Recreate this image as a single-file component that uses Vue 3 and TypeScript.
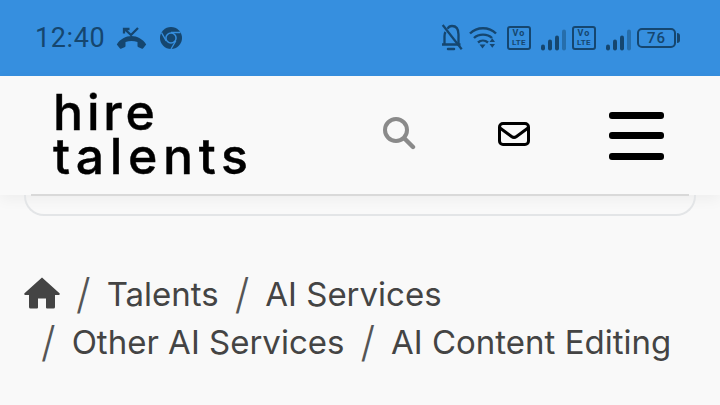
<script setup lang="ts">
const signalBars = [
  { x: 0, h: 6, o: 1 },
  { x: 7, h: 11, o: 1 },
  { x: 14, h: 15, o: 1 },
  { x: 21, h: 21, o: 0.45 },
];
</script>

<template>
  <div class="page">
    <div class="status-bar">
      <div class="status-left">
        <span class="clock">12:40</span>
        <svg class="ic-call" width="32" height="24" viewBox="0 0 32 24">
          <path d="M.8 18.500C4 13 10 10 15.500 10S27 13 30.200 18.500L27 22.500Q26.500 23 26 22.800L22 21Q21.500 20.700 21.500 20V16Q15.500 14 9.500 16V20Q9.500 20.700 9 21L5 22.800Q4.500 23 4 22.500Z" fill="#15466f" />
          <path d="M8 7.500V3h5.500M8.500 3 15 9l7-7" fill="none" stroke="#15466f" stroke-width="2.300" />
        </svg>
        <svg class="ic-chrome" width="24" height="24" viewBox="0 0 24 24">
          <circle cx="12" cy="12" r="11" fill="#15466f" />
          <path d="M12 6.500h9.400M7.200 14.800 2.500 6.700M16.800 14.800 12 23" stroke="#368fdf" stroke-width="1.300" />
          <circle cx="12" cy="12" r="5.800" fill="#368fdf" />
          <circle cx="12" cy="12" r="4.300" fill="#15466f" />
        </svg>
      </div>
      <div class="status-right">
        <svg class="ic-bell" width="26" height="28" viewBox="0 0 26 28">
          <path d="M2 20.500h18.500M4.500 20.500V12q0-2.500 1-4M7.500 4.800Q9 2 12 2q6.500 0 6.500 8.500v10" fill="none" stroke="#15466f" stroke-width="2.300" stroke-linejoin="round" />
          <path d="M8 25h6" stroke="#15466f" stroke-width="2.500" stroke-linecap="round" />
          <path d="M2.700 1 21.700 25.300" stroke="#15466f" stroke-width="2.200" />
        </svg>
        <svg class="ic-wifi" width="28" height="24" viewBox="0 0 28 24">
          <path d="M1 7.500C8 .5 20 .5 27 7.500M5 12c4.500-4.500 13.500-4.500 18 0M9 16.500c2.800-2.500 7-2.500 10 0" fill="none" stroke="#15466f" stroke-width="2.400" />
          <path d="M10.500 18.500h6l-3 4z" fill="#15466f" />
          <path d="M20.500 16h5.500l-2.700-3.800zM20.500 18h5.500l-2.700 3.800z" fill="#15466f" />
        </svg>
        <div class="volte"><span>Vo</span><span>LTE</span></div>
        <svg class="ic-signal" width="25" height="22" viewBox="0 0 25 22">
          <rect v-for="b in signalBars" :key="b.x" :x="b.x" :y="21.500 - b.h" width="4" :height="b.h" rx="2" fill="#15466f" :opacity="b.o" />
        </svg>
        <div class="volte"><span>Vo</span><span>LTE</span></div>
        <svg class="ic-signal" width="25" height="22" viewBox="0 0 25 22">
          <rect v-for="b in signalBars" :key="b.x" :x="b.x" :y="21.500 - b.h" width="4" :height="b.h" rx="2" fill="#15466f" :opacity="b.o" />
        </svg>
        <div class="battery"><span>76</span></div>
      </div>
    </div>

    <header class="top-nav">
      <div class="logo">hire<br /><span class="logo-second">talents</span></div>
      <div class="nav-icons">
        <svg class="ic-search" width="34" height="34" viewBox="0 0 34 34">
          <circle cx="14" cy="14" r="11" fill="none" stroke="#8a8a8a" stroke-width="4" />
          <path d="M22.500 22.500 31 31" stroke="#8a8a8a" stroke-width="4.400" stroke-linecap="round" />
        </svg>
        <svg class="ic-mail" width="34" height="26" viewBox="0 0 34 26">
          <rect x="2.500" y="2.500" width="29" height="21" rx="3.500" fill="none" stroke="#000" stroke-width="3" />
          <path d="M3 7l11.500 8.500q2.500 1.800 5 0L31 7" fill="none" stroke="#000" stroke-width="3" />
        </svg>
        <div class="burger"><i /><i /><i /></div>
      </div>
    </header>

    <div class="search-card" />

    <nav class="crumbs">
      <svg class="ic-home" width="36" height="32" viewBox="0 0 36 32">
        <path d="M18 0.500 35.500 16.200q.8 1.300-.5 1.800H31v12q0 1.500-1.500 1.500H23q-1 0-1-1v-9h-8v9q0 1-1 1H6.500Q5 31.500 5 30V18H1q-1.300-.5-.5-1.800z" fill="#444" />
      </svg>
      <span class="sep">/</span>
      <span class="crumb">Talents</span>
      <span class="sep">/</span>
      <span class="crumb">AI Services</span>
      <span class="break" />
      <span class="sep sep-first">/</span>
      <span class="crumb">Other AI Services</span>
      <span class="sep">/</span>
      <span class="crumb">AI Content Editing</span>
    </nav>
  </div>
</template>

<style>
html,
body {
  margin: 0;
  background: #f9f9f9;
  overflow: hidden;
}
</style>

<style scoped>
.page {
  width: 720px;
  height: 405px;
  overflow: hidden;
  background: #f9f9f9;
  font-family: Roboto, sans-serif;
}

.status-bar {
  height: 76px;
  background: #368fdf;
  display: flex;
  justify-content: space-between;
  align-items: center;
  padding: 0 44px 0 35px;
  color: #15466f;
}

.status-left,
.status-right {
  display: flex;
  align-items: center;
}

.clock {
  font-size: 27px;
  letter-spacing: 0.6px;
  width: 81px;
}

.ic-chrome {
  margin-left: 11px;
}

.ic-bell {
  margin-right: 3px;
}

.ic-wifi {
  margin-right: 10px;
}

.volte {
  width: 24px;
  height: 24px;
  box-sizing: border-box;
  border: 2px solid #15466f;
  border-radius: 3px;
  display: flex;
  flex-direction: column;
  align-items: center;
  justify-content: center;
  font-size: 9px;
  line-height: 10px;
  font-weight: 700;
  letter-spacing: 1px;
}

.volte span + span {
  font-size: 8px;
  letter-spacing: 0.3px;
}

.ic-signal {
  margin: 3px 6px 0 10px;
}

.battery {
  width: 39px;
  height: 20px;
  box-sizing: border-box;
  border: 2px solid #15466f;
  border-radius: 5px;
  position: relative;
  font-size: 15px;
  line-height: 16px;
  letter-spacing: 1px;
  text-align: center;
  font-weight: 500;
}

.battery::after {
  content: "";
  position: absolute;
  right: -6px;
  top: 3px;
  width: 3px;
  height: 10px;
  background: #15466f;
  border-radius: 0 3px 3px 0;
}

.top-nav {
  height: 119px;
  box-sizing: border-box;
  display: flex;
  justify-content: space-between;
  align-items: center;
  padding: 0 56px 0 53px;
  box-shadow: 0 4px 14px rgba(0, 0, 0, 0.05);
  position: relative;
}

.logo {
  font-family: Inter, sans-serif;
  font-weight: 500;
  font-size: 50px;
  line-height: 44px;
  letter-spacing: 3.800px;
  color: #000;
  margin-top: -3px;
  -webkit-text-stroke: 0.4px #000;
}

.logo-second {
  letter-spacing: 5.600px;
}

.nav-icons {
  display: flex;
  align-items: center;
}

.ic-search {
  margin-top: -5px;
}

.ic-mail {
  margin: -4px 78px 0 81px;
}

.burger {
  width: 55px;
  display: flex;
  flex-direction: column;
  gap: 13.500px;
}

.burger i {
  display: block;
  height: 7px;
  border-radius: 3px;
  background: #000;
}

.search-card {
  height: 21px;
  margin: 0 24px;
  box-sizing: border-box;
  border: 2px solid #e3e5e7;
  border-top: none;
  border-radius: 0 0 20px 20px;
  position: relative;
}

.search-card::before {
  content: "";
  position: absolute;
  left: 5px;
  right: 5px;
  top: -1px;
  height: 2px;
  background: #d9d9d9;
}

.crumbs {
  display: flex;
  flex-wrap: wrap;
  align-items: center;
  padding: 54px 24px 0;
  font-family: Inter, "Open Sans", sans-serif;
  font-size: 33px;
  color: #444;
}

.break {
  flex-basis: 100%;
}

.ic-home {
  margin-top: -3px;
}

.crumb {
  height: 48px;
  line-height: 48px;
}

.sep {
  font-size: 42px;
  line-height: 48px;
  font-weight: 300;
  color: #555;
  margin: 0 16px;
}

.sep-first {
  margin-left: 17px;
}
</style>
